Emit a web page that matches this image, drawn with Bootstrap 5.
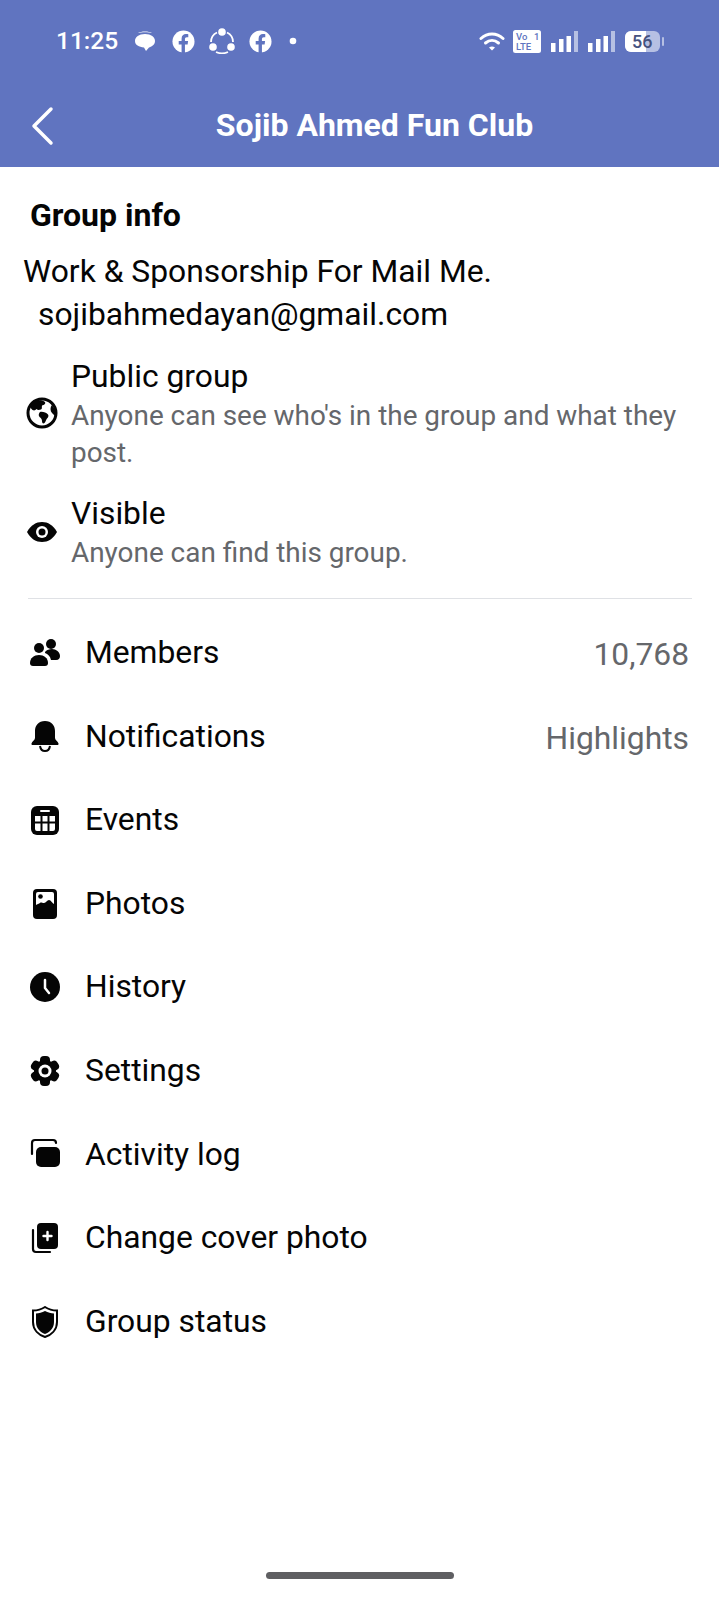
<!DOCTYPE html>
<html>
<head>
  <title>Group info</title>
  <link href="https://cdn.jsdelivr.net/npm/bootstrap@5.3.7/dist/css/bootstrap.min.css" rel="stylesheet" />
  <style>
    body { font-family: Roboto, "Noto Sans", sans-serif; color: #050505; background: #fff; }
    .screen-wrap { height: 1600px; }
    .top-head { background: #6074c0; color: #fff; height: 167px; }
    .status-row { height: 84px; padding-left: 56px; padding-bottom: 2px; }
    .status-time { font-size: 24.500px; font-weight: 500; width: 78px; }
    .title-row { height: 83px; padding-left: 30px; }
    .back-ico { width: 24px; height: 40px; flex-shrink: 0; }
    .page-title { font-size: 32px; font-weight: 700; line-height: 1; padding-right: 24px; padding-bottom: 2px; }
    .info-head { font-size: 32px; font-weight: 700; line-height: 36px; padding: 30px 0 0 30px; }
    .about-text { font-size: 31.800px; line-height: 43px; padding: 17px 0 0 23px; }
    .about-text span { padding-left: 15px; }
    .priv-list { padding: 19px 0 0 26px; }
    .priv-item { gap: 13px; margin-bottom: 21px; }
    .priv-ico { width: 32px; height: 32px; flex-shrink: 0; }
    .priv-name { font-size: 31.800px; line-height: 42px; }
    .priv-desc { font-size: 27.900px; line-height: 37px; color: #65676b; }
    .info-rule { height: 1px; background: #dfe1e5; margin: 6px 27px 0 28px; }
    .menu-list { padding: 12px 30px 0 30px; }
    .menu-item { height: 83.600px; font-size: 31.800px; }
    .menu-ico { width: 30px; height: 32px; margin-right: 25px; flex-shrink: 0; }
    .menu-val { font-size: 31.800px; color: #65676b; padding-top: 5px; }
    .home-bar { width: 188px; height: 7px; border-radius: 4px; background: #5f5f62; margin-bottom: 21px; }
  </style>
</head>
<body>
  <div class="screen-wrap d-flex flex-column">
    <div class="top-head">
      <div class="status-row d-flex align-items-center">
        <div class="status-time">11:25</div>
        <svg width="22" height="22" viewBox="0 0 22 22" fill="#fff"><path d="M4 3c3-2 11-2 14 0-4-1-10-1-14 0z"/><path d="M11 4c6 0 10 3 10 7s-4 6-6 6.500l-3 3.500-2-3.500C5 17 1 15 1 11s4-7 10-7z"/></svg>
        <svg class="ms-3" width="23" height="23" viewBox="0 0 24 24"><circle cx="12" cy="12" r="11.500" fill="#fff"/><path d="M10 24v-9H7v-3.500h3V9c0-3 2-4.700 4.500-4.700 1.200 0 2.500.2 2.500.2v3h-1.500c-1.500 0-2 .9-2 1.900v2.100h3.300l-.5 3.500H13.500v9z" fill="#6074c0"/></svg>
        <svg style="margin-left:14px" width="26" height="26" viewBox="0 0 26 26" fill="#fff"><circle cx="13" cy="4" r="3.800"/><circle cx="4" cy="19" r="3.800"/><circle cx="22" cy="19" r="3.800"/><path d="M8 4.500C4 6.500 2 10 2 14M18 4.500c4 2 6 5.500 6 9.500M7 24c4 1.800 8 1.800 12 0" fill="none" stroke="#fff" stroke-width="1.800"/></svg>
        <svg style="margin-left:14px" width="23" height="23" viewBox="0 0 24 24"><circle cx="12" cy="12" r="11.500" fill="#fff"/><path d="M10 24v-9H7v-3.500h3V9c0-3 2-4.700 4.500-4.700 1.200 0 2.500.2 2.500.2v3h-1.500c-1.500 0-2 .9-2 1.900v2.100h3.300l-.5 3.500H13.500v9z" fill="#6074c0"/></svg>
        <svg style="margin-left:17px" width="8" height="8" viewBox="0 0 8 8" fill="#fff"><circle cx="4" cy="4" r="3.300"/></svg>
        <div class="ms-auto d-flex align-items-center" style="padding-right:55px">
          <svg width="26" height="19" viewBox="0 0 26 19" fill="none" stroke="#fff" stroke-width="3" stroke-linecap="round"><path d="M2 6.500c6.500-6 15.500-6 22 0"/><path d="M6.500 11c4-3.500 9-3.500 13 0"/><path d="M13 18.500l-3-3c2-1.300 4-1.300 6 0z" fill="#fff" stroke="none"/></svg>
          <svg class="ms-2" width="28" height="23" viewBox="0 0 28 23"><rect width="28" height="23" rx="2.500" fill="#fff"/><text x="3" y="10" font-family="Roboto" font-size="9.500" font-weight="500" fill="#6074c0">Vo</text><text x="21" y="10" font-family="Roboto" font-size="9.500" font-weight="500" fill="#6074c0">1</text><text x="3" y="20" font-family="Roboto" font-size="9.500" font-weight="500" fill="#6074c0">LTE</text></svg>
          <svg style="margin-left:10px" width="27" height="21" viewBox="0 0 27 21" fill="#fff"><rect y="12" width="4.500" height="9"/><rect x="8" y="8" width="4.500" height="13"/><rect x="15.500" y="5" width="4.500" height="16"/><rect x="23" width="4" height="21" fill="#b6c0e3"/></svg>
          <svg style="margin-left:10px" width="27" height="21" viewBox="0 0 27 21" fill="#fff"><rect y="12" width="4.500" height="9"/><rect x="8" y="8" width="4.500" height="13"/><rect x="15.500" y="5" width="4.500" height="16"/><rect x="23" width="4" height="21" fill="#b6c0e3"/></svg>
          <svg style="margin-left:10px" width="39" height="21" viewBox="0 0 39 21"><rect width="35" height="21" rx="6" fill="#b6c0e3"/><path d="M6 0h15v21H6a6 6 0 0 1-6-6V6a6 6 0 0 1 6-6z" fill="#fff"/><text x="7" y="17" font-family="Roboto" font-size="18" font-weight="500" fill="#46527f">56</text><rect x="37" y="6" width="2" height="9" rx="1" fill="#b6c0e3"/></svg>
        </div>
      </div>
      <div class="title-row d-flex align-items-center">
        <svg class="back-ico" viewBox="0 0 24 40" fill="none" stroke="#fff" stroke-width="3.500" stroke-linecap="round" stroke-linejoin="round"><path d="M21 3 4 20l17 17"/></svg>
        <div class="page-title flex-grow-1 text-center">Sojib Ahmed Fun Club</div>
      </div>
    </div>

    <div class="info-head">Group info</div>
    <div class="about-text">Work &amp; Sponsorship For Mail Me.<br><span>sojibahmedayan@gmail.com</span></div>

    <div class="priv-list">
      <div class="priv-item d-flex align-items-center">
        <svg class="priv-ico" viewBox="0 0 32 32"><circle cx="16" cy="16" r="14" fill="#fff" stroke="#050505" stroke-width="3"/><path d="M9 4c3-1 8-1 10 1 1 2-1 3-3 3.500-.5 2 .5 3-1 4-2 .5-3 1-4.500-.5-1 1-2 2-4 1-1-1-2-2-2-3 .5-3 2-5 4.500-6zM14 15c3-.5 6 .5 8 2.500 1 1.500 0 3-1 4s-1 3-2.500 4.500c-1.500 1-2.500 0-2.500-2s-1-3-2.500-4c-1.500-2-.5-4 .5-5zM26 8l3 5c.5 2 .5 4 0 6l-3-3c-2-2-2-6 0-8z" fill="#050505"/></svg>
        <div>
          <div class="priv-name">Public group</div>
          <div class="priv-desc">Anyone can see who's in the group and what they<br>post.</div>
        </div>
      </div>
      <div class="priv-item d-flex align-items-center">
        <svg class="priv-ico" viewBox="0 0 32 32"><path d="M1 16C5 9 10 6 16 6s11 3 15 10c-4 7-9 10-15 10S5 23 1 16z" fill="#050505"/><circle cx="16" cy="16" r="6" fill="#fff"/><circle cx="16" cy="16" r="3.500" fill="#050505"/></svg>
        <div>
          <div class="priv-name">Visible</div>
          <div class="priv-desc">Anyone can find this group.</div>
        </div>
      </div>
    </div>

    <div class="info-rule"></div>

    <div class="menu-list">
      <div class="menu-item d-flex align-items-center">
        <svg class="menu-ico" viewBox="0 0 30 32" fill="#050505"><circle cx="21" cy="7" r="5"/><circle cx="9" cy="11" r="5"/><path d="M0 26c0-5 4-8 9-8s9 3 9 8c0 2-1 3-3 3H3c-2 0-3-1-3-3z"/><path d="M16 14c1-1 3-2 6-2 4 0 8 3 8 7 0 2-1 4-4 4h-5c-1-4-3-6-6-7 0-1 0-1 1-2z"/></svg>
        <span>Members</span>
        <span class="menu-val ms-auto">10,768</span>
      </div>
      <div class="menu-item d-flex align-items-center">
        <svg class="menu-ico" viewBox="0 0 30 32" fill="#050505"><path d="M15 1c6.500 0 10 4.500 10 10v7c0 2 3 3.500 3.500 5.500.3 1.200-.5 1.500-1.500 1.500H3c-1 0-1.800-.3-1.500-1.500C2 21.500 5 20 5 18v-7C5 5.500 8.500 1 15 1z"/><path d="M10 26c.5 3 2.500 5 5 5s4.500-2 5-5" fill="none" stroke="#050505" stroke-width="2"/></svg>
        <span>Notifications</span>
        <span class="menu-val ms-auto">Highlights</span>
      </div>
      <div class="menu-item d-flex align-items-center">
        <svg class="menu-ico" viewBox="0 0 30 32"><rect x="1" y="2" width="28" height="29" rx="6" fill="#050505"/><rect x="10" y="6" width="10" height="2" rx="1" fill="#fff"/><path d="M5 12h5.500v5.500H5zM12.500 12h5v5.500h-5zM19.500 12H25v5.500h-5.500zM5 19.500h5.500V27H7a2 2 0 0 1-2-2zM12.500 19.500h5V27h-5zM19.500 19.500H25V25a2 2 0 0 1-2 2h-3.500z" fill="#fff"/></svg>
        <span>Events</span>
      </div>
      <div class="menu-item d-flex align-items-center">
        <svg class="menu-ico" viewBox="0 0 30 32"><rect x="3" y="1" width="24" height="30" rx="4" fill="#050505"/><path d="M6 6a2 2 0 0 1 2-2h14a2 2 0 0 1 2 2v10c-2-1-3-4-5-4s-3 3-5 3-3-1-4 0-3 1-4 2z" fill="#fff"/><circle cx="10.500" cy="8.500" r="2.300" fill="#050505"/></svg>
        <span>Photos</span>
      </div>
      <div class="menu-item d-flex align-items-center">
        <svg class="menu-ico" viewBox="0 0 30 32"><circle cx="15" cy="16" r="15" fill="#050505"/><path d="M15 9v8l4 5" fill="none" stroke="#fff" stroke-width="2.500" stroke-linecap="round" stroke-linejoin="round"/></svg>
        <span>History</span>
      </div>
      <div class="menu-item d-flex align-items-center">
        <svg class="menu-ico" viewBox="0 0 30 32"><g fill="#050505"><circle cx="15" cy="16" r="11"/><rect x="10" y="1" width="10" height="30" rx="4"/><rect x="10" y="1" width="10" height="30" rx="4" transform="rotate(60 15 16)"/><rect x="10" y="1" width="10" height="30" rx="4" transform="rotate(120 15 16)"/></g><circle cx="15" cy="16" r="6.500" fill="#fff"/><circle cx="15" cy="16" r="3.500" fill="#050505"/></svg>
        <span>Settings</span>
      </div>
      <div class="menu-item d-flex align-items-center">
        <svg class="menu-ico" viewBox="0 0 30 32"><path d="M2 16V5a3 3 0 0 1 3-3h18a3 3 0 0 1 3 3" fill="none" stroke="#050505" stroke-width="2.200" stroke-linecap="round"/><rect x="6" y="9" width="24" height="20" rx="5" fill="#050505"/></svg>
        <span>Activity log</span>
      </div>
      <div class="menu-item d-flex align-items-center">
        <svg class="menu-ico" viewBox="0 0 30 32"><rect x="7" y="1" width="21" height="26" rx="4" fill="#050505"/><path d="M17.500 10v8M13.500 14h8" stroke="#fff" stroke-width="2.400" stroke-linecap="round"/><path d="M3 8v19a3 3 0 0 0 3 3h14" fill="none" stroke="#050505" stroke-width="2.200" stroke-linecap="round"/></svg>
        <span>Change cover photo</span>
      </div>
      <div class="menu-item d-flex align-items-center">
        <svg class="menu-ico" viewBox="0 0 30 32"><path d="M15 1c3 2 8 3.500 12 3.500V16c0 8-6 13-12 15C9 29 3 24 3 16V4.500C7 4.500 12 3 15 1z" fill="none" stroke="#050505" stroke-width="2"/><path d="M15 5c3 1.500 6 2.500 9 2.500V16c0 6-4 10-9 12-5-2-9-6-9-12V7.500c3 0 6-1 9-2.500z" fill="#050505"/></svg>
        <span>Group status</span>
      </div>
    </div>

    <div class="home-bar mt-auto mx-auto"></div>
  </div>
  <script src="https://cdn.jsdelivr.net/npm/bootstrap@5.3.7/dist/js/bootstrap.bundle.min.js"></script>
</body>
</html>
